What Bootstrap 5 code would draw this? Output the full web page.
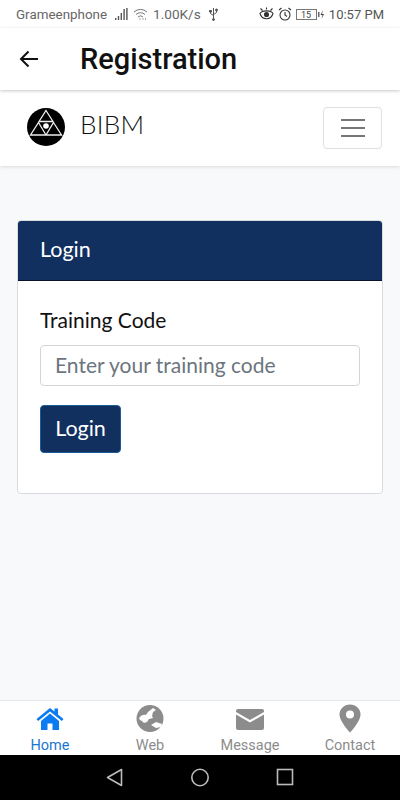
<!DOCTYPE html>
<html lang="en">
<head>
  <meta charset="UTF-8" />
  <meta name="viewport" content="width=device-width, initial-scale=1.0" />
  <title>Registration</title>
  <link href="https://cdn.jsdelivr.net/npm/bootstrap@5.3.0/dist/css/bootstrap.min.css" rel="stylesheet" />
  <style>
    body { font-family: "Lato", "Open Sans", sans-serif; background: #f8f9fb; color: #111; }
    .phone { height: 800px; width: 400px; overflow: hidden; }

    .status-row { height: 28px; padding: 0 16px 0 16px; font: 13px Roboto, sans-serif; color: #666; background: #fff; white-space: nowrap; }
    .status-row svg { display: block; flex: none; }
    .status-carrier { font-size: 13.4px; }
    .status-wifi { margin-left: 5px; }
    .status-speed { margin-left: 5px; font-size: 13.6px; }
    .status-right { color: #555; }

    .app-top { height: 62px; background: #fff; box-shadow: 0 1px 3px rgba(0,0,0,.22); z-index: 3; padding-left: 19px; }
    .app-title { font: 500 29px Roboto, sans-serif; color: #111; margin: 0 0 0 41px; }

    .site-nav { height: 76px; background: #fff; box-shadow: 0 1px 3px rgba(0,0,0,.13); padding: 0 18px 0 27px; z-index: 2; }
    .site-logo { margin-top: -2px; }
    .site-name { font-size: 26px; font-weight: 300; color: #111; margin: 0 0 7px 15px; letter-spacing: .3px; }
    .menu-btn { width: 59px; height: 42px; padding: 0; border: 1px solid #dfdfdf; border-radius: 4px; background: #fff; }

    .main-area { padding: 54px 17px 0; }
    .login-card { height: 274px; border-color: #d9dadd; border-radius: 4px; }
    .login-head { height: 60px; background: #11305f; color: #fff; font-size: 21.5px; padding: 0 22px 3px; border-bottom: 1px solid #08142c; border-radius: 3px 3px 0 0 !important; }
    .login-body { padding: 24px 22px; }
    .code-label { font-size: 21px; line-height: 30px; margin-bottom: 10px; color: #111; }
    .code-input { height: 41px; font-size: 21px; padding: 0 14px 2px; border-color: #d2d4d8; border-radius: 4px; }
    .code-input::placeholder { color: #6c757d; }
    .login-btn { height: 48px; width: 81px; margin-top: 19px; padding: 0 0 2px; background: #11305f; border: 1px solid #1a5c96; border-radius: 4px; color: #fff; font-size: 21.5px; }

    .tab-bar { height: 55px; background: #fff; border-top: 1px solid #e6e6e6; font: 14.5px Roboto, sans-serif; color: #8c8c8c; }
    .tab-item { width: 100px; height: 54px; padding-top: 3px; }
    .tab-item svg { display: block; height: 29px; }
    .tab-item span { line-height: 19px; margin-top: 3px; }
    .tab-active { color: #1976d2; }

    .sys-bar { height: 45px; background: #000; }
  </style>
</head>
<body>
  <div class="phone d-flex flex-column">
    <div class="status-row d-flex align-items-center">
      <span class="status-carrier">Grameenphone</span>
      <svg class="ms-2" width="13" height="12" viewBox="0 0 13 12" fill="#555"><rect x="0" y="10" width="1.4" height="2"/><rect x="2.800" y="8" width="1.400" height="4"/><rect x="5.600" y="5" width="1.400" height="7"/><rect x="8.400" y="1" width="1.400" height="11"/><rect x="11.200" y="0" width="1.400" height="12"/></svg>
      <svg class="status-wifi" width="15" height="12" viewBox="0 0 15 12" fill="none" stroke="#777" stroke-width="1"><path d="M1 4a9.500 9.500 0 0 1 13 0M3 6.500a6.500 6.500 0 0 1 9 0M5 9a3.500 3.500 0 0 1 5 0"/><path d="M6.500 11h1M9.500 11h1M12 11h1" stroke="#555"/></svg>
      <span class="status-speed">1.00K/s</span>
      <svg class="ms-2" width="9" height="14" viewBox="0 0 9 14" fill="none" stroke="#555" stroke-width="1"><path d="M4.500 1v12M1.500 4v2.500l3 2M7.500 3.500v2l-3 2"/><path d="M.5 3.500h2v1.500h-2z" fill="#555"/><circle cx="7.500" cy="3" r="1" fill="#555"/><circle cx="4.500" cy="12.500" r="1" fill="#555"/></svg>
      <div class="status-right d-flex align-items-center gap-1 ms-auto">
        <svg width="15" height="14" viewBox="0 0 15 14" fill="none" stroke="#333" stroke-width="1.100"><path d="M1 6.500c2-3.500 11-3.500 13 0-2 7-11 7-13 0zM1.500 1.500l2 2M13.500 1.500l-2 2M7.500 .5v2"/><circle cx="7.500" cy="7.500" r="2" fill="#333"/></svg>
        <svg width="14" height="14" viewBox="0 0 14 14" fill="none" stroke="#333" stroke-width="1.100"><circle cx="7" cy="8" r="5"/><path d="M7 5v3l2 1.500M1 3l2.500-2M13 3l-2.500-2"/></svg>
        <svg width="29" height="11" viewBox="0 0 29 11" fill="none"><rect x=".5" y=".5" width="20" height="10" stroke="#777"/><rect x="22" y="3" width="1.500" height="5" fill="#666"/><text x="5" y="9" font-size="9" fill="#444" font-family="Roboto">15</text><path d="M27 1l-2.500 5h2l-1 4 2.500-5h-2z" fill="#444"/></svg>
        <span>10:57 PM</span>
      </div>
    </div>

    <div class="app-top d-flex align-items-center">
      <svg width="20" height="18" viewBox="0 0 20 18" fill="none" stroke="#111" stroke-width="2"><path d="M19 9H2M9.500 1.500 2 9l7.500 7.500"/></svg>
      <h1 class="app-title">Registration</h1>
    </div>

    <nav class="site-nav d-flex align-items-center">
      <svg class="site-logo" width="38" height="38" viewBox="0 0 38 38">
        <circle cx="19" cy="19" r="19" fill="#000"/>
        <g fill="none" stroke="#eee" stroke-width="1.300"><path d="M19 2.500 26 13.500H12zM11.500 14.500 19 27H3.500zM26.500 14.500 34.500 27H19z"/></g>
        <circle cx="19" cy="18" r="2.800" fill="#fff"/>
      </svg>
      <span class="site-name">BIBM</span>
      <button class="menu-btn btn ms-auto d-flex align-items-center justify-content-center" type="button" aria-label="Menu">
        <svg width="26" height="20" viewBox="0 0 26 20" stroke="#777" stroke-width="2"><path d="M1 2h24M1 10h24M1 18h24"/></svg>
      </button>
    </nav>

    <main class="main-area flex-grow-1">
      <div class="card login-card">
        <div class="card-header login-head d-flex align-items-center">Login</div>
        <div class="card-body login-body">
          <label class="form-label code-label d-block" for="trainingCode">Training Code</label>
          <input class="form-control code-input" id="trainingCode" type="text" placeholder="Enter your training code" />
          <button class="btn login-btn d-block" type="button">Login</button>
        </div>
      </div>
    </main>

    <div class="tab-bar d-flex">
      <div class="tab-item tab-active d-flex flex-column align-items-center">
        <svg width="28" height="29" viewBox="0 0 28 29" fill="#0a7bf0"><path d="M14 4 .5 15l1.600 2L14 7.500 25.900 17l1.600-2L22 10.500V4.500h-3.500v3z"/><path d="M14 9.500 5 17v9h6.500v-6.500h5V26H23v-9z"/></svg>
        <span>Home</span>
      </div>
      <div class="tab-item d-flex flex-column align-items-center">
        <svg width="28" height="29" viewBox="0 0 28 29"><circle cx="14" cy="14.500" r="13.500" fill="#8c8c8c"/><path d="M3 14c2-3 5-4 7-3l2-3 5-4 3 2-3 2-1 4 1 2-4 1-2 3-3 1-2-2-2-1zM15 21l5-3 6 2-1 3-5 1z" fill="#fff"/></svg>
        <span>Web</span>
      </div>
      <div class="tab-item d-flex flex-column align-items-center">
        <svg width="28" height="29" viewBox="0 0 28 29" fill="#8c8c8c"><path d="M2 5h24a2 2 0 0 1 2 2v1L14 16 0 8V7a2 2 0 0 1 2-2z"/><path d="M0 10.500l14 8 14-8V24a2 2 0 0 1-2 2H2a2 2 0 0 1-2-2z"/></svg>
        <span>Message</span>
      </div>
      <div class="tab-item d-flex flex-column align-items-center">
        <svg width="22" height="29" viewBox="0 0 22 29"><path d="M11 .500C5 .500.500 5 .500 10.500c0 7 10.500 18 10.500 18s10.500-11 10.500-18C21.500 5 17 .500 11 .500z" fill="#8c8c8c"/><circle cx="11" cy="10.500" r="4" fill="#fff"/></svg>
        <span>Contact</span>
      </div>
    </div>

    <div class="sys-bar d-flex align-items-center justify-content-center">
      <svg width="200" height="22" viewBox="0 0 200 22" fill="none" stroke="#bbb" stroke-width="1.600">
        <path d="M21.500 2.500v16L7.500 10.500z" stroke-linejoin="round"/>
        <circle cx="100" cy="10.500" r="8.200"/>
        <rect x="177.500" y="2.500" width="15" height="15"/>
      </svg>
    </div>
  </div>
  <script src="https://cdn.jsdelivr.net/npm/bootstrap@5.3.0/dist/js/bootstrap.bundle.min.js"></script>
</body>
</html>
